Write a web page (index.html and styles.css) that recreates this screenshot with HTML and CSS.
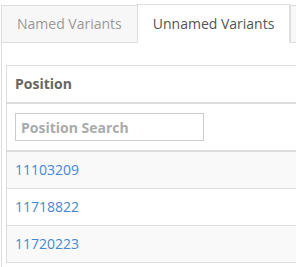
FILE: index.html
```html
<!DOCTYPE html>
<html lang="en">
  <head>
    <meta charset="UTF-8" />
    <meta name="viewport" content="width=device-width, initial-scale=1.0" />
    <title>Variants</title>
    <link rel="stylesheet" href="styles.css">
  </head>
  <body>
    <div class="page">
      <ul class="tabs">
        <li class="tab">Named Variants</li>
        <li class="tab active">Unnamed Variants</li>
        <li class="tab more"></li>
      </ul>
      <div class="tab-content">
        <table class="variants">
          <thead>
            <tr>
              <th>Position</th>
            </tr>
            <tr class="filter">
              <th>
                <input type="text" class="search" placeholder="Position Search" />
              </th>
            </tr>
          </thead>
          <tbody>
            <tr class="odd">
              <td><a href="#">11103209</a></td>
            </tr>
            <tr>
              <td><a href="#">11718822</a></td>
            </tr>
            <tr class="odd">
              <td><a href="#">11720223</a></td>
            </tr>
          </tbody>
        </table>
      </div>
    </div>
  </body>
</html>
```

FILE: styles.css
```css
body {
  margin: 0;
  overflow: hidden;
  font-family: "Open Sans", "Liberation Sans", sans-serif;
  font-size: 14px;
  line-height: 20px;
  color: #555;
  background-color: #fff;
}
.page {
  width: 600px;
  padding: 4px 0 0 1px;
}
.tabs {
  display: flex;
  align-items: flex-end;
  list-style: none;
  margin: 0 0 -1px 0;
  padding: 0;
}
.tab {
  position: relative;
  height: 20px;
  padding: 8px 15px;
  border: 1px solid #ddd;
  background-color: #f7f7f7;
  color: #999;
  white-space: nowrap;
}
.tab.active {
  padding-top: 9px;
  margin-left: -1px;
  background-color: #fff;
  border-bottom-color: #fff;
  color: #555;
}
.tab.more {
  width: 120px;
}
.tab-content {
  border-top: 1px solid #ddd;
  border-left: 1px solid #ddd;
  padding: 22px 0 0 4px;
  height: 400px;
}
.variants {
  width: 560px;
  border-collapse: collapse;
  border: 1px solid #ddd;
}
.variants th,
.variants td {
  padding: 8px;
  text-align: left;
  border: 1px solid #ddd;
}
.variants th {
  font-weight: 700;
  color: #666;
}
.variants thead th {
  border-bottom-width: 2px;
}
.variants .odd {
  background-color: #f9f9f9;
}
.variants a {
  color: #4a86cf;
  text-decoration: none;
}
.search {
  display: block;
  box-sizing: border-box;
  width: 189px;
  height: 28px;
  margin: 1px 0;
  padding: 0 5px;
  border: 1px solid #ccc;
  font-family: inherit;
  font-size: 14px;
  font-weight: 700;
}
.search::placeholder {
  color: #aaa;
}
```
